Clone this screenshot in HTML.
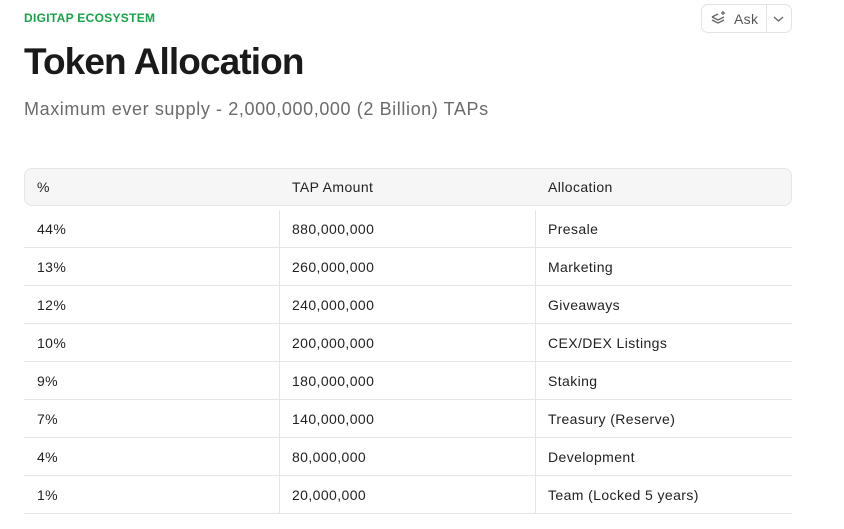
<!DOCTYPE html>
<html><head><style>
body{margin:0;width:844px;height:529px;background:#fff;font-family:"Liberation Sans",sans-serif;position:relative;overflow:hidden;color:#1c1c1c}
.a{position:absolute;white-space:nowrap}
.eye{left:24px;top:11px;font-size:12px;font-weight:bold;color:#16a34a;letter-spacing:0.3px}
h1{position:absolute;left:24px;top:40px;margin:0;font-size:37px;font-weight:bold;color:#1a1a1a;letter-spacing:-0.9px;line-height:44px}
.sub{left:24px;top:99px;font-size:18px;color:#6b6b6b;letter-spacing:0.6px}
.ask{left:701px;top:4px;width:89px;height:27px;border:1px solid #e3e3e3;border-radius:7px}
.ask .d{position:absolute;left:64px;top:0;width:1px;height:27px;background:#e3e3e3}
.ask .t{position:absolute;left:32px;top:6px;font-size:14px;color:#555;letter-spacing:0.3px}
.hd{left:24px;top:168px;width:766px;height:36px;background:#f5f6f5;border:1px solid #e6e6e6;border-radius:8px}
.c{font-size:14px;color:#222;letter-spacing:0.4px}
.hl{position:absolute;left:24px;width:768px;height:1px;background:#e6e6e6}
.vl{position:absolute;width:1px;background:#e6e6e6;top:210px;height:304px}
</style></head><body>
<div class="a eye">DIGITAP ECOSYSTEM</div>
<h1>Token Allocation</h1>
<div class="a sub">Maximum ever supply - 2,000,000,000 (2 Billion) TAPs</div>
<div class="a ask">
<svg style="position:absolute;left:8px;top:5px" width="18" height="17" viewBox="0 0 18 17" fill="none" stroke="#666" stroke-width="1.3"><path d="M2 7l6 3 6-3M2 10l6 3 6-3M8 4L2 7"/><path d="M13 1v4M11 3h4"/></svg>
<span class="t">Ask</span><span class="d"></span>
<svg style="position:absolute;left:71px;top:10px" width="11" height="8" viewBox="0 0 11 8" fill="none" stroke="#666" stroke-width="1.3"><path d="M1 2l4.5 4L10 2"/></svg>
</div>
<div class="a hd"></div>
<div class="a c" style="left:37px;top:179px">%</div>
<div class="a c" style="left:292px;top:179px">TAP Amount</div>
<div class="a c" style="left:548px;top:179px">Allocation</div>
<div class="vl" style="left:279px"></div>
<div class="vl" style="left:535px"></div>
<div class="hl" style="top:247px"></div><div class="hl" style="top:285px"></div><div class="hl" style="top:323px"></div><div class="hl" style="top:361px"></div><div class="hl" style="top:399px"></div><div class="hl" style="top:437px"></div><div class="hl" style="top:475px"></div><div class="hl" style="top:513px"></div>
<div class="a c" style="left:37px;top:221px">44%</div><div class="a c" style="left:292px;top:221px">880,000,000</div><div class="a c" style="left:548px;top:221px">Presale</div>
<div class="a c" style="left:37px;top:259px">13%</div><div class="a c" style="left:292px;top:259px">260,000,000</div><div class="a c" style="left:548px;top:259px">Marketing</div>
<div class="a c" style="left:37px;top:297px">12%</div><div class="a c" style="left:292px;top:297px">240,000,000</div><div class="a c" style="left:548px;top:297px">Giveaways</div>
<div class="a c" style="left:37px;top:335px">10%</div><div class="a c" style="left:292px;top:335px">200,000,000</div><div class="a c" style="left:548px;top:335px">CEX/DEX Listings</div>
<div class="a c" style="left:37px;top:373px">9%</div><div class="a c" style="left:292px;top:373px">180,000,000</div><div class="a c" style="left:548px;top:373px">Staking</div>
<div class="a c" style="left:37px;top:411px">7%</div><div class="a c" style="left:292px;top:411px">140,000,000</div><div class="a c" style="left:548px;top:411px">Treasury (Reserve)</div>
<div class="a c" style="left:37px;top:449px">4%</div><div class="a c" style="left:292px;top:449px">80,000,000</div><div class="a c" style="left:548px;top:449px">Development</div>
<div class="a c" style="left:37px;top:487px">1%</div><div class="a c" style="left:292px;top:487px">20,000,000</div><div class="a c" style="left:548px;top:487px">Team (Locked 5 years)</div>
</body></html>
